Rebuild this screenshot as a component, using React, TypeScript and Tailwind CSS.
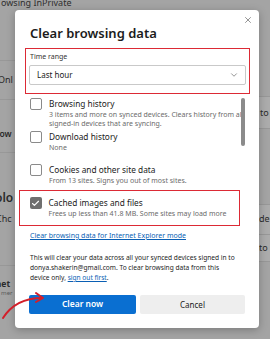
import { ChevronDown, X, Check } from "lucide-react";

type Item = {
  title: string;
  sub: string[];
  checked?: boolean;
};

const items: Item[] = [
  {
    title: "Browsing history",
    sub: [
      "3 items and more on synced devices. Clears history from all",
      "signed-in devices that are syncing.",
    ],
  },
  { title: "Download history", sub: ["None"] },
];

function Checkbox({ checked }: { checked?: boolean }) {
  return (
    <div
      className={
        checked
          ? "w-[12px] h-[12px] shrink-0 rounded-[2px] bg-[#6f6f6f] flex items-center justify-center"
          : "w-[12px] h-[12px] shrink-0 rounded-[2px] border border-[#8a8a8a] bg-white"
      }
    >
      {checked && <Check className="w-[9px] h-[9px] text-white" strokeWidth={3} />}
    </div>
  );
}

function Row({ item, className }: { item: Item; className?: string }) {
  return (
    <div className={"flex gap-[7px] " + (className ?? "")}>
      <div className="pt-[1px]">
        <Checkbox checked={item.checked} />
      </div>
      <div className="flex flex-col">
        <div className="text-[8.3px] leading-[13px] text-[#1b1b1b]">{item.title}</div>
        {item.sub.map((s) => (
          <div key={s} className="text-[7px] leading-[9px] text-[#6b6b6b] whitespace-nowrap">
            {s}
          </div>
        ))}
      </div>
    </div>
  );
}

export default function App() {
  return (
    <div
      className="relative w-[270px] h-[339px] overflow-hidden bg-[#a4a4a4]"
      style={{ fontFamily: '"Noto Sans", "Open Sans", sans-serif' }}
    >
      {/* page behind the dialog */}
      <div className="text-[9px] leading-[10px] text-[#2e2e2e] -mt-[2px] pl-[1px] whitespace-nowrap">
        owsing InPrivate
      </div>
      <div className="flex justify-between h-[329px]">
        <div className="w-[15px] flex flex-col text-[#2a2a2a] whitespace-nowrap overflow-hidden">
          <div className="mt-[52px] border-t border-[#989898]" />
          <div className="mt-[13px] text-[9px] leading-[12px] -ml-[2px]">Onl</div>
          <div className="mt-[13px] border-t border-[#989898]" />
          <div className="mt-[28px] text-[8.5px] leading-[12px] font-semibold -ml-[4px]">row</div>
          <div className="mt-[12px] border-t border-[#989898]" />
          <div className="mt-[38px] text-[12px] leading-[14px] font-semibold -ml-[5px]">olo</div>
          <div className="mt-[8px] text-[9px] leading-[12px] -ml-[4px]">Chc</div>
          <div className="mt-[40px] border-t border-[#989898]" />
          <div className="mt-[12px] text-[8.5px] leading-[11px] font-bold -ml-[8px]">rnet</div>
          <div className="text-[6px] leading-[8px] text-[#5a5a5a] -ml-[3px]">r mer</div>
        </div>
        <div className="w-[12px] flex flex-col text-[#2a2a2a] whitespace-nowrap overflow-hidden">
          <div className="mt-[88px] h-[33px] bg-[#acacac] border-y border-[#989898] text-[9px] leading-[31px] pl-[2px]">
            to
          </div>
          <div className="mt-[75px] h-[30px] bg-[#acacac] border-t border-[#989898] text-[9px] leading-[28px] pl-[1px]">
            de
          </div>
          <div className="h-[28px] bg-[#acacac] border-y border-[#989898] text-[9px] leading-[26px] pl-[1px]">
            to
          </div>
        </div>
      </div>

      {/* dialog */}
      <div className="absolute left-[15px] top-[10px] w-[244px] h-[318px] bg-white rounded-[4px] shadow-[0_2px_8px_rgba(0,0,0,0.25)] flex flex-col">
        <button className="absolute top-[4px] right-[5px] w-[12px] h-[12px] flex items-center justify-center text-[#555]">
          <X className="w-[10px] h-[10px]" strokeWidth={1.5} />
        </button>
        <div className="pt-[13px] pl-[15px] text-[13px] leading-[20px] font-semibold text-[#1b1b1b]">
          Clear browsing data
        </div>

        <div className="mt-[5px] ml-[10px] mr-[9px] h-[46px] border-[1.5px] border-[#dc2a35] px-[3px] pt-[3px]">
          <div className="text-[7px] leading-[9px] text-[#333] pl-[1px]">Time range</div>
          <div className="mt-[4px] h-[20px] border border-[#c9c9c9] rounded-[2px] flex items-center justify-between pl-[7px] pr-[6px]">
            <span className="text-[8px] text-[#1b1b1b]">Last hour</span>
            <ChevronDown className="w-[10px] h-[10px] text-[#555]" strokeWidth={1.5} />
          </div>
        </div>

        <div className="relative mt-[3px]">
          <div className="absolute right-[14px] top-[1px] w-[4px] h-[48px] rounded-full bg-[#8b8b8b]" />
          <div className="flex flex-col pl-[15px]">
            {items.map((it) => (
              <Row key={it.title} item={it} className="h-[33px]" />
            ))}
            <Row
              item={{ title: "Cookies and other site data", sub: ["From 13 sites. Signs you out of most sites."] }}
              className="h-[27px]"
            />
          </div>
          <div className="ml-[4px] w-[221px] h-[36px] border-[1.5px] border-[#dc2a35] pl-[9.5px] pt-[5px]">
            <Row
              item={{
                title: "Cached images and files",
                sub: ["Frees up less than 41.8 MB. Some sites may load more"],
                checked: true,
              }}
            />
          </div>
        </div>

        <div className="mt-[5px] pl-[15px] text-[7px] leading-[10px] text-[#0a5fb4] underline">
          Clear browsing data for Internet Explorer mode
        </div>

        <div className="mt-[12px] pl-[15px] text-[6.6px] leading-[10px] text-[#1b1b1b] whitespace-nowrap">
          <div>This will clear your data across all your synced devices signed in to</div>
          <div>donya.shakerin@gmail.com. To clear browsing data from this</div>
          <div>
            device only, <span className="text-[#0a5fb4] underline">sign out first</span>.
          </div>
        </div>

        <div className="mt-[12px] px-[14px] flex gap-[4px]">
          <button className="w-[107px] h-[19px] rounded-[2px] bg-[#0a6fd1] text-white text-[8.5px] font-semibold">
            Clear now
          </button>
          <button className="w-[105px] h-[19px] rounded-[2px] bg-[#eeeeee] text-[#1b1b1b] text-[8px]">
            Cancel
          </button>
        </div>
      </div>

      {/* annotation arrow */}
      <svg className="absolute left-0 top-[287px]" width="50" height="36" viewBox="0 0 50 36">
        <path d="M3 31 C 10 20, 22 11, 42 11" fill="none" stroke="#d31f2a" strokeWidth="2" strokeLinecap="round" />
        <path d="M36 6 L43 11 L36 15" fill="none" stroke="#d31f2a" strokeWidth="2" strokeLinecap="round" strokeLinejoin="round" />
      </svg>
    </div>
  );
}
